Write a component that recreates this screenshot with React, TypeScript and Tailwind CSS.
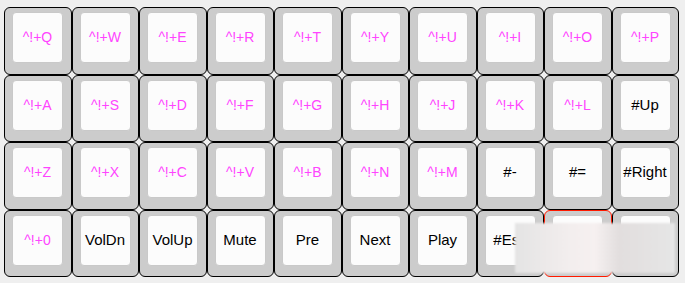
import React from 'react';

type Key = { label: string; color: 'pink' | 'black'; active?: boolean };

const rows: string[][] = [
  ['^!+Q', '^!+W', '^!+E', '^!+R', '^!+T', '^!+Y', '^!+U', '^!+I', '^!+O', '^!+P'],
  ['^!+A', '^!+S', '^!+D', '^!+F', '^!+G', '^!+H', '^!+J', '^!+K', '^!+L', '#Up'],
  ['^!+Z', '^!+X', '^!+C', '^!+V', '^!+B', '^!+N', '^!+M', '#-', '#=', '#Right'],
  ['^!+0', 'VolDn', 'VolUp', 'Mute', 'Pre', 'Next', 'Play', '#Esc', '#Left', '#Down'],
];

const keys: Key[] = rows.flatMap((row, r) =>
  row.map((label, c) => ({
    label,
    color: label.startsWith('^') ? 'pink' : 'black',
    active: r === 3 && c === 8,
  }))
);

function KeyCap({ k }: { k: Key }) {
  return (
    <div
      className={`bg-[#cccccc] border rounded-[6px] pl-[7px] pt-[4px] ${
        k.active ? 'border-[#ff1a00]' : 'border-black'
      }`}
    >
      <div className="w-[51px] h-[51px] bg-[#fcfcfc] border border-[#c9c9c9] rounded-[4px] flex items-center justify-center">
        <span
          className={`whitespace-nowrap ${
            k.color === 'pink' ? 'text-[14px] text-[#ff44ff]' : 'text-[15px] text-black'
          }`}
        >
          {k.label}
        </span>
      </div>
    </div>
  );
}

export default function App() {
  return (
    <div
      className="relative w-[685px] h-[283px] bg-[#efefef] pl-[4px] pt-[7px] overflow-hidden"
      style={{ fontFamily: '"Liberation Sans", Arial, sans-serif' }}
    >
      <div className="grid grid-cols-[repeat(10,67.5px)] auto-rows-[67.5px]">
        {keys.map((k, i) => (
          <KeyCap key={i} k={k} />
        ))}
      </div>
      {/* blurred cover over the corner */}
      <div className="absolute left-[515px] top-[223px] w-[160px] h-[50px] bg-[linear-gradient(90deg,#e4e4e4_0%,#f3eeee_35%,#f6f0f0_50%,#e2dede_65%,#e6e6e6_100%)] blur-[1px]" />
    </div>
  );
}
